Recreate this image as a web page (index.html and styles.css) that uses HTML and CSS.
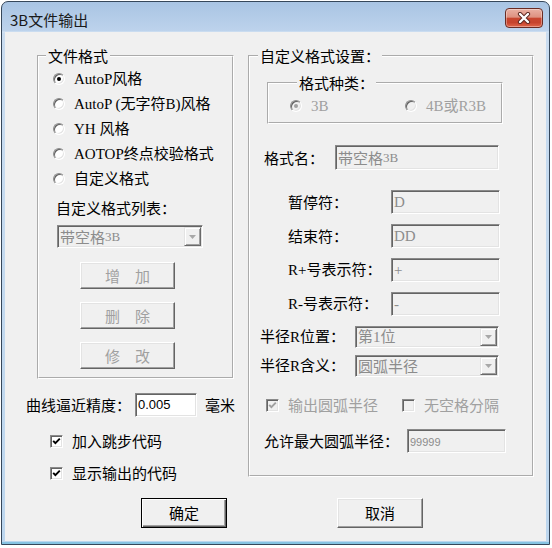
FILE: index.html
```html
<!DOCTYPE html>
<html lang="zh-CN">
<head>
<meta charset="utf-8">
<title>3B文件输出</title>
<link rel="stylesheet" href="styles.css">
</head>
<body>
<div class="window">
  <div class="titlebar">
    <span class="title">3B文件输出</span>
    <button class="close" aria-label="关闭">
      <svg width="14" height="12" viewBox="0 0 14 12"><path d="M3 2 L11 10 M11 2 L3 10" stroke="#5a2620" stroke-width="4.2" stroke-linecap="round"/><path d="M3 2 L11 10 M11 2 L3 10" stroke="#fff" stroke-width="2.4" stroke-linecap="round"/></svg>
    </button>
  </div>
  <div class="client">
    <div class="columns">
      <div class="left-col">
        <fieldset class="group group-file">
          <legend>文件格式</legend>
          <div class="radio-list">
            <label class="opt"><span class="radio checked"></span><span class="mix">AutoP风格</span></label>
            <label class="opt"><span class="radio"></span><span class="mix">AutoP (无字符B)风格</span></label>
            <label class="opt"><span class="radio"></span><span class="mix">YH 风格</span></label>
            <label class="opt"><span class="radio"></span><span class="mix">AOTOP终点校验格式</span></label>
            <label class="opt"><span class="radio"></span><span class="mix">自定义格式</span></label>
          </div>
          <div class="list-label">自定义格式列表：</div>
          <div class="combo combo-list sunken"><span class="combo-text">带空格<span class="small-lat">3B</span></span><span class="combo-btn"><svg width="7" height="4" viewBox="0 0 7 4"><polygon points="0,0 7,0 3.5,4" fill="#a8a8a8"/></svg></span></div>
          <div class="btn-stack">
            <button class="btn raised disabled">增　加</button>
            <button class="btn raised disabled">删　除</button>
            <button class="btn raised disabled">修　改</button>
          </div>
        </fieldset>
        <div class="precision-row">
          <span class="prec-lbl">曲线逼近精度：</span>
          <span class="field field-white sunken">0.005</span>
          <span class="unit">毫米</span>
        </div>
        <label class="check-row"><span class="check sunken"><svg width="11" height="11" viewBox="0 0 11 11"><path d="M2.2 4.8 L4.4 7.2 L8.8 2.6" fill="none" stroke="#000" stroke-width="1.9"/></svg></span>加入跳步代码</label>
        <label class="check-row row-2"><span class="check sunken"><svg width="11" height="11" viewBox="0 0 11 11"><path d="M2.2 4.8 L4.4 7.2 L8.8 2.6" fill="none" stroke="#000" stroke-width="1.9"/></svg></span>显示输出的代码</label>
      </div>
      <fieldset class="group group-custom">
        <legend>自定义格式设置：</legend>
        <fieldset class="group group-kind">
          <legend>格式种类：</legend>
          <div class="kind-row">
            <label class="opt opt-3b"><span class="radio checked off"></span><span class="mix gray">3B</span></label>
            <label class="opt"><span class="radio off"></span><span class="mix gray">4B或R3B</span></label>
          </div>
        </fieldset>
        <div class="frow frow-name">
          <span class="lbl">格式名：</span>
          <span class="field sunken w-name">带空格<span class="small-lat">3B</span></span>
        </div>
        <div class="frow frow-sym first-sym">
          <span class="lbl">暂停符：</span>
          <span class="field sunken w-sym mix">D</span>
        </div>
        <div class="frow frow-sym">
          <span class="lbl">结束符：</span>
          <span class="field sunken w-sym mix">DD</span>
        </div>
        <div class="frow frow-sym">
          <span class="lbl mix">R+号表示符：</span>
          <span class="field sunken w-sym mix">+</span>
        </div>
        <div class="frow frow-sym">
          <span class="lbl mix">R-号表示符：</span>
          <span class="field sunken w-sym mix">-</span>
        </div>
        <div class="frow frow-radius first-radius">
          <span class="lbl mix">半径R位置：</span>
          <span class="combo sunken w-radius"><span class="combo-text mix">第1位</span><span class="combo-btn"><svg width="7" height="4" viewBox="0 0 7 4"><polygon points="0,0 7,0 3.5,4" fill="#a8a8a8"/></svg></span></span>
        </div>
        <div class="frow frow-radius second-radius">
          <span class="lbl mix">半径R含义：</span>
          <span class="combo sunken w-radius"><span class="combo-text">圆弧半径</span><span class="combo-btn"><svg width="7" height="4" viewBox="0 0 7 4"><polygon points="0,0 7,0 3.5,4" fill="#a8a8a8"/></svg></span></span>
        </div>
        <div class="checks-inline">
          <label class="check-item first-check"><span class="check sunken off"><svg width="11" height="11" viewBox="0 0 11 11"><path d="M2.2 4.8 L4.4 7.2 L8.8 2.6" fill="none" stroke="#a0a0a0" stroke-width="1.9"/></svg></span>输出圆弧半径</label>
          <label class="check-item"><span class="check sunken off"></span>无空格分隔</label>
        </div>
        <div class="frow frow-max">
          <span class="lbl">允许最大圆弧半径：</span>
          <span class="field sunken w-max num">99999</span>
        </div>
      </fieldset>
    </div>
    <div class="actions">
      <button class="btn btn-default">确定</button>
      <button class="btn raised">取消</button>
    </div>
  </div>
</div>
</body>
</html>
```

FILE: styles.css
```css
* { box-sizing: border-box; }
html, body { margin: 0; padding: 0; background: #fff; }
body {
  font-family: "Noto Sans CJK SC", "Noto Sans", sans-serif;
  font-size: 15px;
  line-height: 18px;
  color: #000;
}

.window {
  margin: 1px 0 0 1px;
  width: 549px;
  height: 544px;
  border: 1px solid #36475a;
  border-radius: 7px 7px 0 0;
  padding: 0 3px 3px;
  display: flex;
  flex-direction: column;
  background: linear-gradient(to bottom, #a9c4e3 0, #bdd3ec 29px, #d6e5f4 30px, #c9dcf0 31px, #bcd6ee 100%);
  box-shadow: inset 0 -2px 0 #86c3e2;
}

.titlebar {
  height: 30px;
  flex: none;
  display: flex;
  justify-content: space-between;
  align-items: flex-start;
  padding-left: 5px;
}
.title {
  margin-top: 8px;
  line-height: 20px;
  font-size: 15px;
  color: #1a1a1a;
}
.close {
  margin: 6px 3px 0 0;
  width: 38px;
  height: 20px;
  padding: 0;
  border: 1px solid #6a2c24;
  border-radius: 4px;
  background: linear-gradient(to bottom, #eab0a3 0%, #de9180 45%, #c8462f 52%, #c6432d 75%, #e0654a 100%);
  box-shadow: inset 0 0 0 1px rgba(255, 255, 255, 0.35);
  display: flex;
  align-items: center;
  justify-content: center;
}

.client {
  flex: 1;
  background: #f0f0f0;
  padding: 15px 0 0 21px;
  display: flex;
  flex-direction: column;
}
.columns {
  display: flex;
  align-items: flex-start;
}
.left-col {
  width: 222px;
  flex: none;
  display: flex;
  flex-direction: column;
}

/* group boxes */
fieldset.group {
  margin: 0;
  padding: 0;
  min-width: 0;
  border: 2px groove #fff;
}
fieldset.group > legend {
  padding: 0 2px;
  margin-left: 7px;
  line-height: 18px;
  font-size: 15px;
}
.group-file {
  margin-left: 11px !important;
  width: 197px;
  padding-bottom: 8px !important;
}
.group-custom {
  width: 286px;
  padding-bottom: 22px !important;
}
.group-custom > legend { margin-left: 8px !important; }
.group-kind {
  margin: 9px 0 0 17px !important;
  width: 236px;
  padding: 2px 0 4px 21px !important;
}

/* mixed latin / CJK text in the SimSun-like style */
.mix { font-family: "Liberation Serif", "Noto Sans CJK SC", serif; }
.small-lat { font-family: "Liberation Serif", serif; font-size: 13px; }
.gray { color: #a0a0a0; }

/* radios */
.radio-list {
  padding: 1px 0 0 14px;
  display: flex;
  flex-direction: column;
}
.opt {
  height: 25px;
  display: flex;
  align-items: center;
  gap: 9px;
}
.radio {
  width: 12px;
  height: 12px;
  flex: none;
  border-radius: 50%;
  background: #fff;
  border: 1px solid;
  border-color: #8c8c8c #fff #fff #8c8c8c;
  box-shadow: inset 1px 1px 0 #5f5f5f, inset -1px -1px 0 #e3e3e3;
  display: flex;
  align-items: center;
  justify-content: center;
}
.radio.checked::after {
  content: "";
  width: 4px;
  height: 4px;
  border-radius: 50%;
  background: #000;
}
.radio.off { background: #f0f0f0; }
.radio.off.checked::after { background: #a0a0a0; }

.kind-row {
  height: 24px;
  display: flex;
  align-items: center;
}
.kind-row .opt { height: 24px; }
.opt-3b { width: 115px; }

/* list label + combo */
.list-label {
  margin-top: 7px;
  padding-left: 17px;
  line-height: 20px;
}
.sunken {
  border: 1px solid;
  border-color: #8a8a8a #fff #fff #8a8a8a;
  box-shadow: inset 1px 1px 0 #646464, inset -1px -1px 0 #e3e3e3;
}
.combo {
  display: flex;
  align-items: stretch;
  background: #f0f0f0;
  color: #8c8c8c;
  padding: 1px;
}
.combo-list {
  margin: 7px 0 0 18px;
  width: 146px;
  height: 23px;
}
.combo-text {
  flex: 1;
  padding-left: 1px;
  display: flex;
  align-items: center;
  white-space: nowrap;
}
.combo-btn {
  width: 17px;
  flex: none;
  background: #f0f0f0;
  border: 1px solid;
  border-color: #e3e3e3 #696969 #696969 #e3e3e3;
  box-shadow: inset 1px 1px 0 #fff, inset -1px -1px 0 #a0a0a0;
  display: flex;
  align-items: center;
  justify-content: center;
}

/* buttons */
.btn {
  font: inherit;
  line-height: 18px;
  padding: 0;
  background: #f0f0f0;
  color: #000;
}
.raised {
  border: 1px solid;
  border-color: #fff #646464 #646464 #fff;
  box-shadow: inset -1px -1px 0 #a0a0a0, inset 1px 1px 0 #e3e3e3;
}
.btn.disabled { color: #a0a0a0; }
.btn-stack {
  margin: 14px 0 0 41px;
  display: flex;
  flex-direction: column;
  gap: 13px;
}
.btn-stack .btn {
  width: 95px;
  height: 27px;
}

/* precision */
.precision-row {
  margin-top: 14px;
  height: 24px;
  display: flex;
  align-items: center;
}
.prec-lbl { width: 109px; flex: none; white-space: nowrap; }
.field {
  display: flex;
  align-items: center;
  padding: 0 2px;
  background: #f0f0f0;
  color: #8c8c8c;
  white-space: nowrap;
}
.field-white {
  width: 62px;
  height: 24px;
  background: #fff;
  color: #000;
  font-family: "Liberation Sans", sans-serif;
  font-size: 13px;
}
.unit { margin-left: 8px; }

/* checkboxes */
.check {
  width: 13px;
  height: 13px;
  flex: none;
  background: #fff;
  display: flex;
  align-items: center;
  justify-content: center;
}
.check svg { display: block; }
.check.off { background: #f0f0f0; }
.check-row {
  margin-top: 12px;
  padding-left: 24px;
  height: 24px;
  display: flex;
  align-items: center;
  gap: 9px;
}
.check-row.row-2 { margin-top: 8px; }

/* right form rows */
.frow {
  display: flex;
  align-items: center;
  height: 24px;
  margin-top: 10px;
}
.lbl { flex: none; white-space: nowrap; }
.frow-name { margin-top: 21px; height: 25px; padding-left: 14px; }
.frow-name .lbl { width: 71px; }
.w-name { width: 164px; height: 25px; }
.frow-sym { padding-left: 38px; }
.frow-sym.first-sym { margin-top: 20px; }
.frow-sym .lbl { width: 103px; }
.w-sym { width: 109px; height: 24px; }
.frow-radius { padding-left: 10px; height: 22px; }
.frow-radius.second-radius { margin-top: 7px; }
.frow-radius .lbl { width: 95px; }
.w-radius { width: 144px; height: 22px; }

.checks-inline {
  margin-top: 18px;
  height: 20px;
  padding-left: 16px;
  display: flex;
  align-items: center;
  color: #a0a0a0;
}
.check-item {
  display: flex;
  align-items: center;
  gap: 9px;
}
.first-check { width: 136px; }

.frow-max { margin-top: 14px; padding-left: 14px; }
.frow-max .lbl { width: 143px; }
.w-max { width: 99px; height: 24px; }
.num {
  font-family: "Liberation Sans", sans-serif;
  font-size: 11px;
  color: #8c8c8c;
  align-items: flex-start;
  padding-top: 3px;
}

/* bottom actions */
.actions {
  margin-top: 13px;
  padding-left: 115px;
  display: flex;
  gap: 110px;
}
.actions .btn {
  width: 86px;
  height: 30px;
}
.btn-default {
  border: 1px solid #000;
  box-shadow: inset 1px 1px 0 #fff, inset -1px -1px 0 #646464, inset -2px -2px 0 #a0a0a0;
}
```
